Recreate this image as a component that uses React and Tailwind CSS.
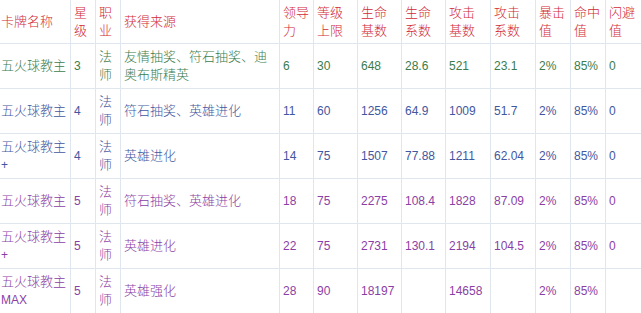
const RED = "text-[#d22a35]";

const headers = [
  ["卡牌名称"],
  ["星", "级"],
  ["职", "业"],
  ["获得来源"],
  ["领导", "力"],
  ["等级", "上限"],
  ["生命", "基数"],
  ["生命", "系数"],
  ["攻击", "基数"],
  ["攻击", "系数"],
  ["暴击", "值"],
  ["命中", "值"],
  ["闪避", "值"],
];

const rows = [
  {
    color: "text-[#3b7c4c]",
    name: ["五火球教主"],
    star: "3",
    source: ["友情抽奖、符石抽奖、迪", "奥布斯精英"],
    stats: ["6", "30", "648", "28.6", "521", "23.1", "2%", "85%", "0"],
  },
  {
    color: "text-[#4257a0]",
    name: ["五火球教主"],
    star: "4",
    source: ["符石抽奖、英雄进化"],
    stats: ["11", "60", "1256", "64.9", "1009", "51.7", "2%", "85%", "0"],
  },
  {
    color: "text-[#4257a0]",
    name: ["五火球教主", "+"],
    star: "4",
    source: ["英雄进化"],
    stats: ["14", "75", "1507", "77.88", "1211", "62.04", "2%", "85%", "0"],
  },
  {
    color: "text-[#8a3fa5]",
    name: ["五火球教主"],
    star: "5",
    source: ["符石抽奖、英雄进化"],
    stats: ["18", "75", "2275", "108.4", "1828", "87.09", "2%", "85%", "0"],
  },
  {
    color: "text-[#8a3fa5]",
    name: ["五火球教主", "+"],
    star: "5",
    source: ["英雄进化"],
    stats: ["22", "75", "2731", "130.1", "2194", "104.5", "2%", "85%", "0"],
  },
  {
    color: "text-[#8a3fa5]",
    name: ["五火球教主", "MAX"],
    star: "5",
    source: ["英雄强化"],
    stats: ["28", "90", "18197", "", "14658", "", "2%", "85%", ""],
  },
];

const Cell = ({ lines, last, first, small }) => (
  <div
    className={`flex flex-col justify-center border-b border-[#dfe6ed] ${
      last ? "" : "border-r"
    } ${first ? "pl-[1px]" : "pl-[3px]"} ${small ? "text-[12px]" : "text-[13px]"} font-light leading-[18px] overflow-hidden whitespace-nowrap`}
  >
    {lines.map((l, i) => (
      <span key={i} className={l === "MAX" || l === "+" ? "text-[12px]" : ""}>
        {l}
      </span>
    ))}
  </div>
);

export default function App() {
  return (
    <div
      className="w-[641px] h-[313px] overflow-hidden bg-white"
      style={{ fontFamily: '"Liberation Sans", "Noto Sans CJK SC", sans-serif' }}
    >
      <div className="grid grid-cols-[71px_25px_25px_159px_34px_44px_44px_44px_45px_45px_35px_35px_60px] grid-rows-[44px_45px_45px_45px_45px_45px_45px] w-[667px]">
        {headers.map((h, i) => (
          <div key={i} className={`contents ${RED}`}>
            <Cell lines={h} first={i === 0} last={i === headers.length - 1} />
          </div>
        ))}
        {rows.map((r, ri) => (
          <div key={ri} className={`contents ${r.color}`}>
            <Cell lines={r.name} first />
            <Cell lines={[r.star]} small />
            <Cell lines={["法", "师"]} />
            <Cell lines={r.source} />
            {r.stats.map((s, si) => (
              <Cell key={si} lines={[s]} small last={si === r.stats.length - 1} />
            ))}
          </div>
        ))}
      </div>
    </div>
  );
}
